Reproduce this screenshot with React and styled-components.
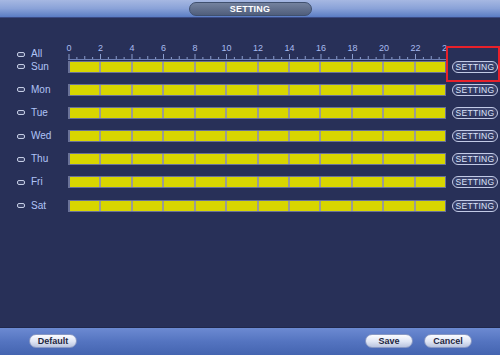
import React from "react";
import styled, { createGlobalStyle } from "styled-components";

const Global = createGlobalStyle`
  html, body { margin: 0; padding: 0; background: #283058; }
  * { box-sizing: border-box; }
`;

const Screen = styled.div`
  width: 500px;
  height: 355px;
  display: flex;
  flex-direction: column;
  font-family: "Liberation Sans", Arial, sans-serif;
  overflow: hidden;
`;

const Header = styled.div`
  height: 18px;
  flex: none;
  display: flex;
  align-items: flex-start;
  justify-content: center;
  padding-top: 2px;
  background: linear-gradient(#a6b8e2, #8aa2d8 50%, #5a7cc4);
  border-bottom: 1px solid #3a4a84;
`;

const TitlePill = styled.div`
  width: 123px;
  height: 14px;
  border-radius: 7px;
  background: linear-gradient(#74829e, #505e7c);
  border: 1px solid #40506e;
  color: #ffffff;
  font-size: 9px;
  font-weight: bold;
  display: flex;
  align-items: center;
  justify-content: center;
  letter-spacing: 0.2px;
`;

const Body = styled.div`
  flex: 1;
  position: relative;
  background: #283058;
  padding: 26px 0 0 17px;
  display: flex;
  flex-direction: column;
`;

const RulerRow = styled.div`
  display: flex;
  height: 16px;
`;

const LabelCell = styled.div`
  width: ${(p) => p.$w || 51}px;
  flex: none;
  display: flex;
  align-items: center;
  gap: 6px;
  color: #b0c4f6;
  font-size: 10px;
  line-height: 12px;
  padding-top: ${(p) => p.$pt || 0}px;
`;

const CheckBox = styled.span`
  width: 8px;
  height: 5px;
  border: 1.5px solid #c4cce4;
  border-radius: 2px;
  background: #3a4268;
  flex: none;
`;

const Ruler = styled.div`
  width: 384px;
  overflow: hidden;
  display: flex;
  flex-direction: column;
  padding-left: 5px;
`;

const Numbers = styled.div`
  height: 9px;
  display: flex;
  position: relative;
`;

const NumCell = styled.div`
  width: 31.5px;
  flex: none;
  position: relative;
  font-size: 9px;
  line-height: 9px;
  color: #a8bcf0;
  & > span {
    position: absolute;
    left: 1px;
    top: 0px;
    transform: translateX(-50%);
  }
`;

const Rows = styled.div`
  display: flex;
  flex-direction: column;
  gap: 11.2px;
  margin-top: 0.5px;
`;

const DayRow = styled.div`
  display: flex;
  align-items: center;
  height: 12px;
`;

const Bar = styled.div`
  width: 378px;
  height: 12px;
  flex: none;
  display: flex;
  border: 1px solid #6a7298;
  border-left: 2px solid #6a7298;
  background: #d8d600;
`;

const Segment = styled.div`
  flex: 1;
  border-left: ${(p) => (p.$first ? "none" : "2px solid #9a9c96")};
`;

const SetButton = styled.button`
  margin-left: 6px;
  width: 46px;
  height: 12px;
  padding: 0;
  border: 1px solid #c2cae6;
  border-radius: 6px;
  background: linear-gradient(#3e4670, #2c335c);
  color: #dde4fa;
  font-family: "Liberation Sans", Arial, sans-serif;
  font-size: 8.5px;
  line-height: 10px;
  letter-spacing: 0.3px;
  display: flex;
  align-items: center;
  justify-content: center;
`;

const Highlight = styled.div`
  position: absolute;
  left: 446px;
  top: 28px;
  width: 54px;
  height: 36px;
  border: 2px solid #e8202a;
  pointer-events: none;
`;

const Footer = styled.div`
  height: 28px;
  flex: none;
  display: flex;
  align-items: center;
  padding: 0 28px 2px 29px;
  background: linear-gradient(#6c8ad2, #5474c0 50%, #4464b0);
  border-top: 1px solid #20284c;
`;

const Spacer = styled.div`
  flex: 1;
`;

const FootButton = styled.button`
  width: 48px;
  height: 14px;
  padding: 0;
  margin-left: ${(p) => p.$ml || 0}px;
  border: 1px solid #8898c4;
  border-radius: 7px;
  background: linear-gradient(#fbfcff, #dfe5f4 55%, #b9c4df);
  color: #1e2640;
  font-family: "Liberation Sans", Arial, sans-serif;
  font-size: 9px;
  font-weight: bold;
  display: flex;
  align-items: center;
  justify-content: center;
`;

const days = ["Sun", "Mon", "Tue", "Wed", "Thu", "Fri", "Sat"];
const hours = [0, 2, 4, 6, 8, 10, 12, 14, 16, 18, 20, 22, 24];

function Ticks() {
  const w = 378;
  const ticks = [];
  for (let i = 0; i <= 48; i++) {
    const x = 1 + (i * w) / 48;
    const h = i % 4 === 0 ? 5 : i % 2 === 0 ? 3 : 2;
    ticks.push(
      <line key={i} x1={x} x2={x} y1={6 - h} y2={6} stroke="#8a9ccc" strokeWidth="1" />
    );
  }
  return (
    <svg width="380" height="7" style={{ display: "block" }}>
      {ticks}
      <line x1="0" x2="380" y1="6.5" y2="6.5" stroke="#6e80b4" strokeWidth="1" />
    </svg>
  );
}

export default function App() {
  return (
    <>
      <Global />
      <Screen>
        <Header>
          <TitlePill>SETTING</TitlePill>
        </Header>
        <Body>
          <RulerRow>
            <LabelCell $pt={4} $w={46}>
              <CheckBox />
              <span>All</span>
            </LabelCell>
            <Ruler>
              <Numbers>
                {hours.map((h) => (
                  <NumCell key={h}>
                    <span>{h}</span>
                  </NumCell>
                ))}
              </Numbers>
              <Ticks />
            </Ruler>
          </RulerRow>
          <Rows>
            {days.map((d) => (
              <DayRow key={d}>
                <LabelCell>
                  <CheckBox />
                  <span>{d}</span>
                </LabelCell>
                <Bar>
                  {Array.from({ length: 12 }).map((_, i) => (
                    <Segment key={i} $first={i === 0} />
                  ))}
                </Bar>
                <SetButton>SETTING</SetButton>
              </DayRow>
            ))}
          </Rows>
          <Highlight />
        </Body>
        <Footer>
          <FootButton>Default</FootButton>
          <Spacer />
          <FootButton>Save</FootButton>
          <FootButton $ml={11}>Cancel</FootButton>
        </Footer>
      </Screen>
    </>
  );
}
